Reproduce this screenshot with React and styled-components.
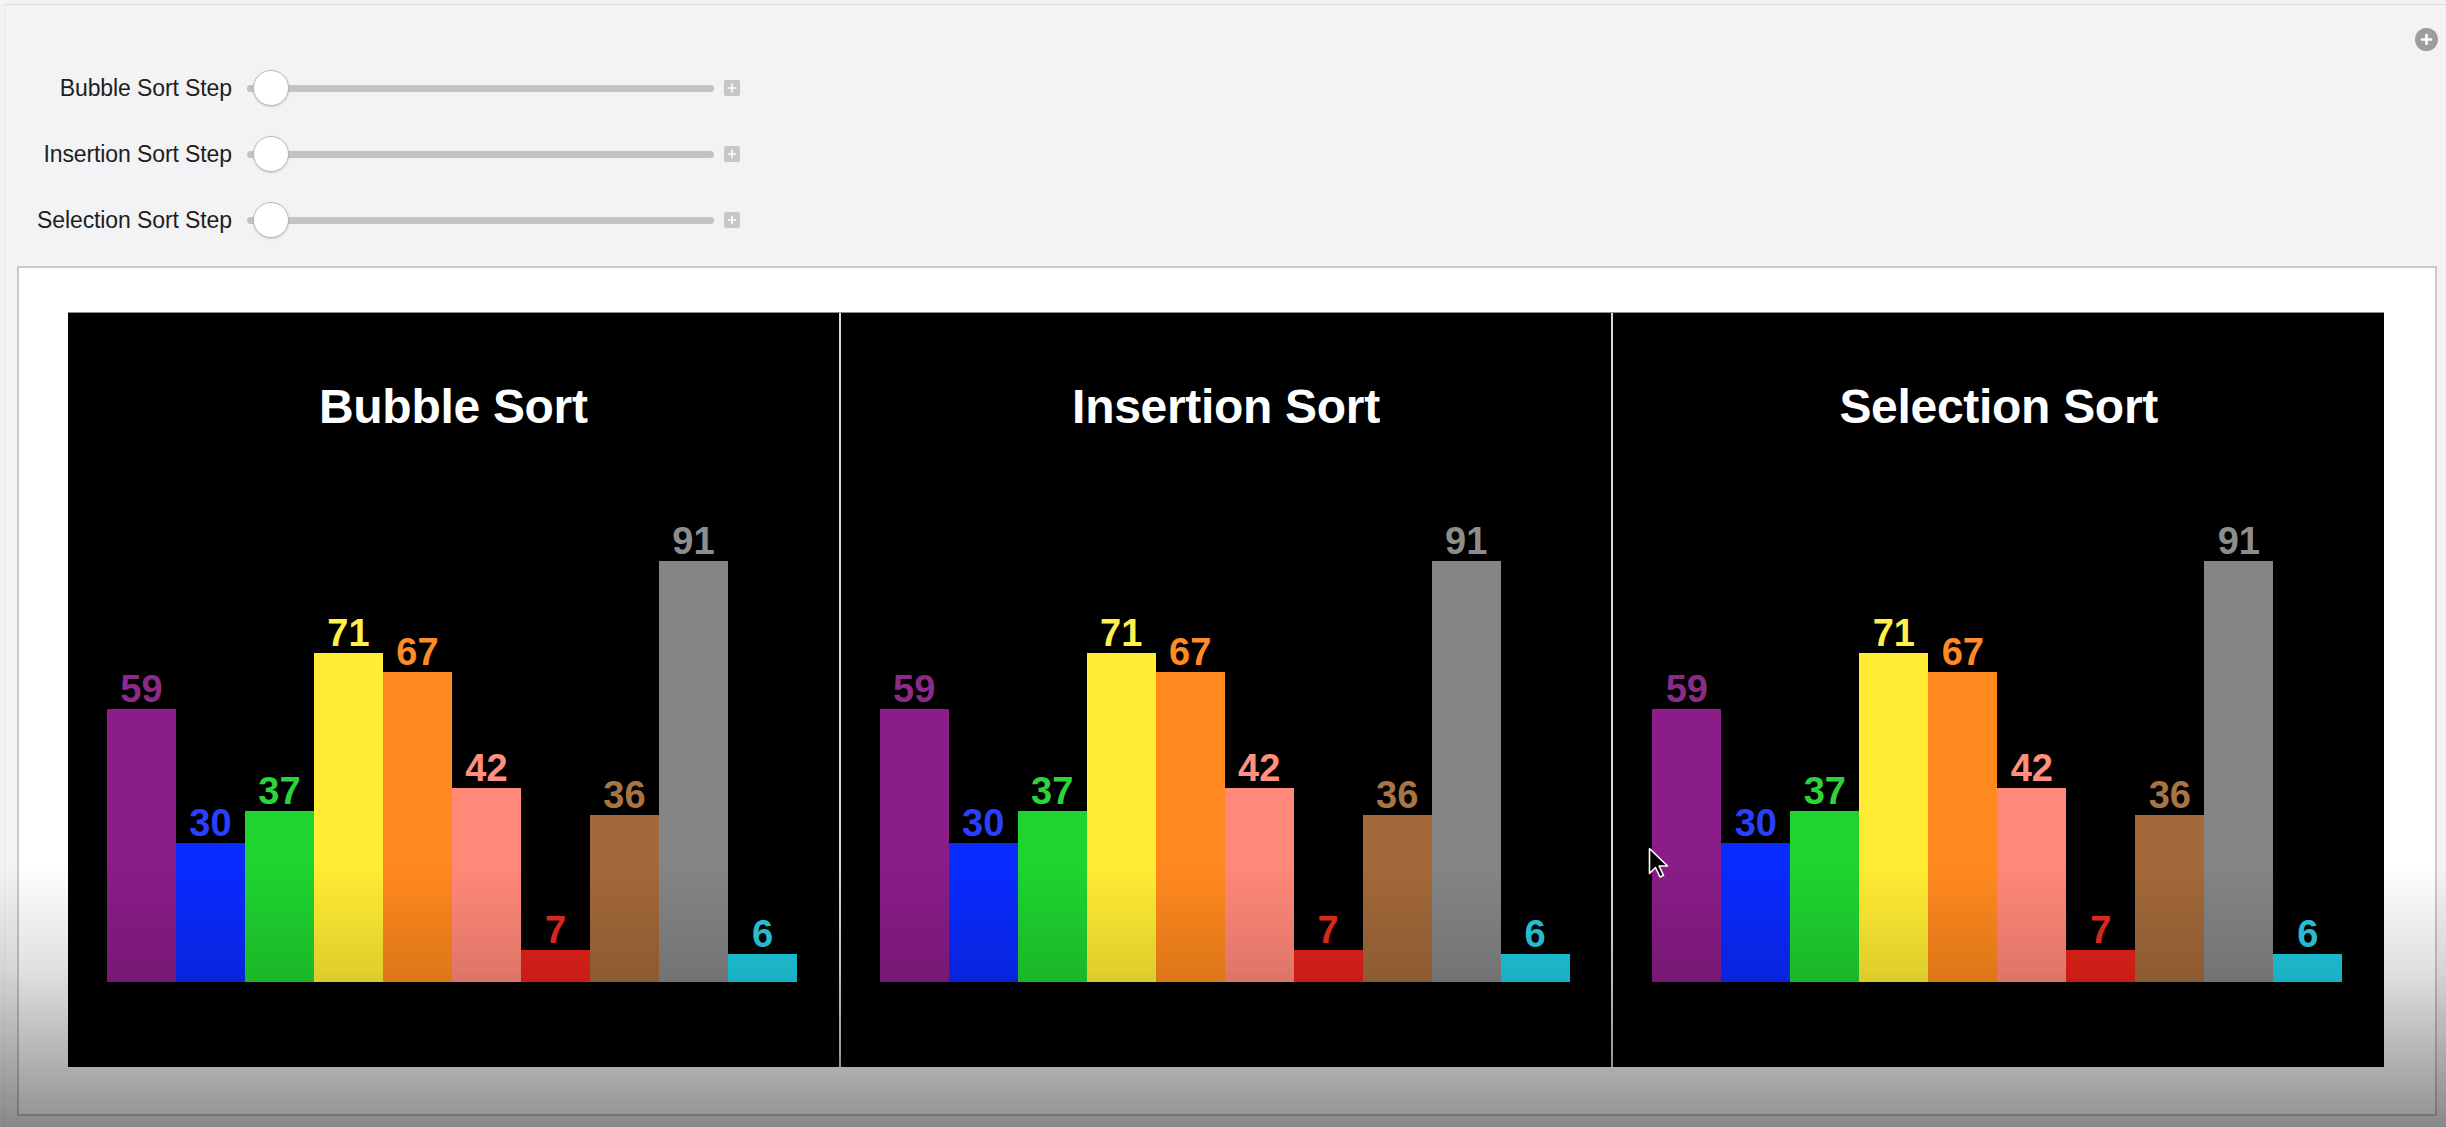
import React from 'react';
import styled, { createGlobalStyle } from 'styled-components';

const GlobalStyle = createGlobalStyle`
    html, body {
        margin: 0;
        padding: 0;
        background: #f3f3f5;
        font-family: "Liberation Sans", Arial, sans-serif;
        overflow: hidden;
    }
`;

const Frame = styled.div`
    position: relative;
    margin-top: 4px;
    margin-left: 4px;
    height: 1122px;
    box-sizing: border-box;
    border-top: 1px solid #dedee0;
    border-left: 1px solid #e6e6e8;
    display: flex;
    flex-direction: column;
`;

const Controls = styled.div`
    padding: 50px 0 13px 0;
    display: flex;
    flex-direction: column;
`;

const Row = styled.div`
    height: 66px;
    display: flex;
    align-items: center;
`;

const Label = styled.div`
    width: 227px;
    text-align: right;
    font-size: 23px;
    color: #1e1e1e;
    letter-spacing: -0.1px;
`;

const Track = styled.div`
    position: relative;
    margin-left: 15px;
    width: 467px;
    height: 7px;
    border-radius: 4px;
    background: #c3c3c5;
`;

const Thumb = styled.div`
    position: absolute;
    left: 6px;
    top: 50%;
    width: 36px;
    height: 36px;
    margin-top: -18px;
    box-sizing: border-box;
    border-radius: 50%;
    background: #fff;
    border: 1.5px solid #b9b9bb;
    box-shadow: 0 1px 2px rgba(0, 0, 0, 0.15);
`;

const StepButton = styled.div`
    margin-left: 10px;
    width: 16px;
    height: 16px;
    border-radius: 2px;
    background: #c6c6c8;
    display: flex;
    align-items: center;
    justify-content: center;
`;

const AddButton = styled.div`
    position: absolute;
    top: 23px;
    right: 8px;
    width: 23px;
    height: 23px;
    border-radius: 50%;
    background: #9d9d9f;
    display: flex;
    align-items: center;
    justify-content: center;
`;

const Output = styled.div`
    flex: 1;
    margin: 0 9px 10px 12px;
    background: #fff;
    border: 2px solid #c9c9cb;
    padding: 44px 51px 47px 49px;
    display: flex;
`;

const Chart = styled.div`
    position: relative;
    flex: 1;
    background: #000;
    border-top: 1px solid #8e8e8e;
    display: flex;
`;

const Panel = styled.div`
    flex: 1;
    display: flex;
    flex-direction: column;
    padding: 70px 0 85px 0;
    border-left: ${p => (p.first ? 'none' : '2px solid #d9d9d9')};
`;

const Title = styled.div`
    text-align: center;
    color: #fff;
    font-weight: bold;
    font-size: 48px;
    line-height: 1;
    letter-spacing: -0.3px;
`;

const Bars = styled.div`
    flex: 1;
    display: flex;
    align-items: flex-end;
    padding-left: 39px;
`;

const Column = styled.div`
    width: 69px;
    display: flex;
    flex-direction: column;
    align-items: center;
`;

const Value = styled.div`
    color: ${p => p.color};
    font-weight: bold;
    font-size: 38px;
    line-height: 1;
    margin-bottom: 1px;
`;

const Bar = styled.div`
    width: 100%;
    background: ${p => p.color};
`;

const Shade = styled.div`
    position: fixed;
    left: 0;
    right: 0;
    bottom: 0;
    height: 260px;
    pointer-events: none;
    background: linear-gradient(to bottom, rgba(0, 0, 0, 0), rgba(0, 0, 0, 0.12) 40%, rgba(0, 0, 0, 0.44));
`;

const Cursor = styled.svg`
    position: absolute;
    left: 1580px;
    top: 534px;
`;

const data = [
    { v: 59, bar: '#8a1d88', text: '#8c2a8a' },
    { v: 30, bar: '#0a2bff', text: '#2a40ff' },
    { v: 37, bar: '#1fd42f', text: '#2cd43a' },
    { v: 71, bar: '#ffec33', text: '#fff04a' },
    { v: 67, bar: '#ff891e', text: '#ff8a26' },
    { v: 42, bar: '#ff8878', text: '#ff9080' },
    { v: 7, bar: '#e8221a', text: '#ea2a22' },
    { v: 36, bar: '#a3693a', text: '#a87445' },
    { v: 91, bar: '#858585', text: '#8d8d8d' },
    { v: 6, bar: '#1fcde3', text: '#2ccbe0' },
];

const sorts = ['Bubble Sort', 'Insertion Sort', 'Selection Sort'];
const steps = ['Bubble Sort Step', 'Insertion Sort Step', 'Selection Sort Step'];

const Plus = ({ size, stroke }) => (
    <svg width={size} height={size} viewBox="0 0 10 10">
        <path d="M5 2v6M2 5h6" stroke="#fff" strokeWidth={stroke} strokeLinecap="round" />
    </svg>
);

const SortPanel = ({ title, first }) => (
    <Panel first={first}>
        <Title>{title}</Title>
        <Bars>
            {data.map((d, i) => (
                <Column key={i}>
                    <Value color={d.text}>{d.v}</Value>
                    <Bar color={d.bar} style={{ height: d.v * 4.63 }} />
                </Column>
            ))}
        </Bars>
    </Panel>
);

const App = () => (
    <>
        <GlobalStyle />
        <Frame>
            <AddButton><Plus size={15} stroke={1.8} /></AddButton>
            <Controls>
                {steps.map(s => (
                    <Row key={s}>
                        <Label>{s}</Label>
                        <Track><Thumb /></Track>
                        <StepButton><Plus size={12} stroke={1.4} /></StepButton>
                    </Row>
                ))}
            </Controls>
            <Output>
                <Chart>
                    {sorts.map((s, i) => <SortPanel key={s} title={s} first={i === 0} />)}
                    <Cursor width="22" height="32" viewBox="0 0 22 32">
                        <path d="M1.5 1.5v25l6-6 4.5 9.5 3.5-1.6-4.4-9.4h8.4z"
                            fill="#000" stroke="#fff" strokeWidth="1.6" strokeLinejoin="round" />
                    </Cursor>
                </Chart>
            </Output>
        </Frame>
        <Shade />
    </>
);

export default App;
